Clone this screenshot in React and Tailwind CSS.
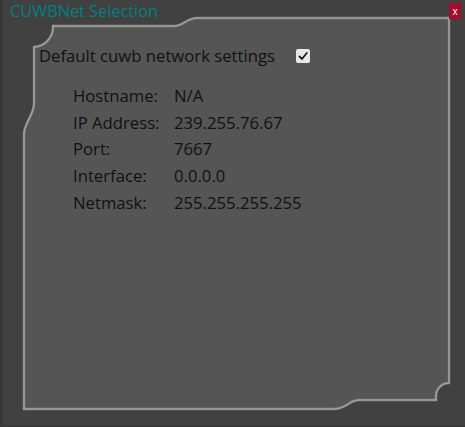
import React from "react";

const rows = [
  ["Hostname:", "N/A"],
  ["IP Address:", "239.255.76.67"],
  ["Port:", "7667"],
  ["Interface:", "0.0.0.0"],
  ["Netmask:", "255.255.255.255"],
];

function Frame() {
  const d =
    "M50 26 L172 26 C180 26 184 18 194 18 L446 18 L446 383 A13 13 0 0 0 433 396 L433 400 L356 400 C346 400 344 409 330 409 L21 409 L21 134 C21 124 31 114 31 104 L31 47 A20 20 0 0 0 50 27 Z";
  return (
    <svg className="absolute left-0 top-0" width="465" height="427" viewBox="0 0 465 427">
      <path d={d} fill="#555555" stroke="#8c8c8c" strokeWidth="2.4" />
      <path d={d} fill="none" stroke="#a4a4a4" strokeWidth="0.9" />
    </svg>
  );
}

export default function App() {
  return (
    <div
      className="relative w-[465px] h-[427px] bg-[#414141] border-l-[3px] border-b-[2px] border-[#393939] overflow-hidden"
      style={{ fontFamily: '"Open Sans", "Noto Sans", sans-serif' }}
    >
      <Frame />
      <div className="relative flex items-start justify-between pl-[7px] pr-[4px]">
        <div className="text-[#008080] text-[16.3px] leading-[22px]">CUWBNet Selection</div>
        <div className="mt-[3px] w-[12px] h-[16px] bg-[#a20d2f] text-white text-[10px] leading-[14px] flex items-center justify-center">
          x
        </div>
      </div>
      <div className="relative pl-[36px] pt-[23px] text-[#111111] text-[16.7px] font-medium">
        <div className="flex items-center h-[22px]">
          <span>Default cuwb network settings</span>
          <div className="ml-[21px] w-[14px] h-[14px] rounded-[2px] bg-[#e8e8e8] flex items-center justify-center">
            <svg width="10" height="10" viewBox="0 0 10 10">
              <path d="M1.5 5.5 L4 8 L8.8 2" fill="none" stroke="#1a1a1a" strokeWidth="1.8" strokeLinecap="round" />
            </svg>
          </div>
        </div>
        <div className="pl-[34px] pt-[15px] flex flex-col">
          {rows.map(([k, v]) => (
            <div key={k} className="flex h-[26.75px] items-center">
              <span className="w-[101px]">{k}</span>
              <span>{v}</span>
            </div>
          ))}
        </div>
      </div>
    </div>
  );
}
